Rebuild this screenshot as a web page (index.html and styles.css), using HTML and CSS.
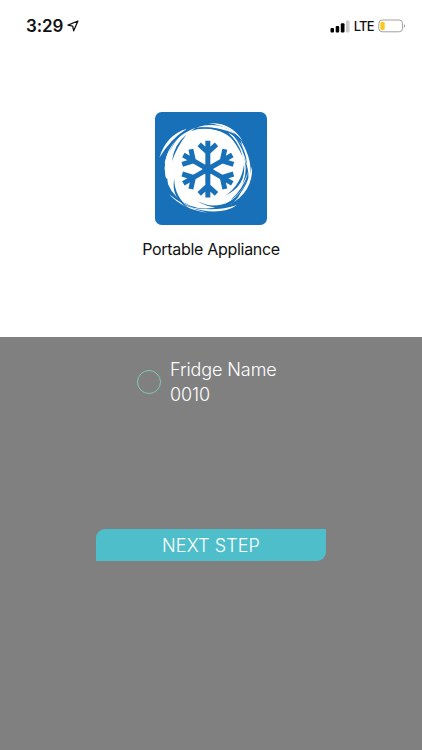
FILE: index.html
```html
<!DOCTYPE html>
<html lang="en">
<head>
    <meta charset="UTF-8">
    <meta name="viewport" content="width=device-width, initial-scale=1.0">
    <title>Portable Appliance</title>
    <link rel="stylesheet" href="styles.css">
</head>
<body>
    <div class="screen">
        <header class="status-bar">
            <div class="status-left">
                <span class="time">3:29</span>
                <svg class="location" width="12" height="12" viewBox="0 0 12 12">
                    <path d="M10.9 1 L1 5.2 L5.7 6.1 L6.7 10.8 Z" fill="none" stroke="#111" stroke-width="1.3" stroke-linejoin="round"/>
                </svg>
            </div>
            <div class="status-right">
                <svg class="signal" width="20" height="14" viewBox="0 0 20 14">
                    <rect x="0.5" y="9" width="3.5" height="4.5" rx="1"/>
                    <rect x="5.7" y="7" width="3.5" height="6.5" rx="1"/>
                    <rect x="10.8" y="4.3" width="3.7" height="9.2" rx="1"/>
                    <rect x="16" y="1.5" width="3.5" height="12" rx="1" fill="#ccc"/>
                </svg>
                <span class="network">LTE</span>
                <svg class="battery" width="28" height="14" viewBox="0 0 28 14">
                    <rect x="0.8" y="1" width="23.8" height="11.8" rx="3.5" fill="#fff" stroke="#a0a0a0"/>
                    <rect x="2.4" y="2.7" width="4.3" height="8.4" rx="1.6" fill="#fdc81e"/>
                    <path d="M26 5 Q28 6.9 26 8.8 Z" fill="#999"/>
                </svg>
            </div>
        </header>
        <section class="brand">
            <svg class="logo" width="112" height="113" viewBox="29 27 337 338" preserveAspectRatio="none">
                <rect x="29" y="27" width="337" height="338" rx="20" fill="#1870b8"/>
                <!-- swirling ice ball -->
                <ellipse cx="180" cy="196" rx="122" ry="120" fill="#fff"/>
                <g fill="#fff">
                    <path d="M42 164 Q62 96 125 77 Q74 109 42 164 Z"/>
                    <path d="M58 180 Q73 103 151 74 Q96 112 75 180 Z"/>
                    <path d="M153 73 Q225 52 270 93 Q225 70 153 73 Z"/>
                    <path d="M190 61 Q258 56 293 114 Q254 69 190 61 Z"/>
                    <path d="M250 88 Q311 125 310 200 Q290 135 250 88 Z"/>
                    <path d="M286 110 Q330 180 311 240 Q312 180 286 110 Z"/>
                    <path d="M321 190 Q325 266 252 305 Q304 265 321 190 Z"/>
                    <path d="M309 205 Q298 283 225 308 Q288 270 309 205 Z"/>
                    <path d="M276 305 Q226 340 130 312 Q216 326 276 305 Z"/>
                    <path d="M71 272 Q112 318 187 328 Q119 314 71 272 Z"/>
                    <path d="M80 254 Q101 300 155 317 Q98 302 80 254 Z"/>
                </g>
                <g fill="#1870b8">
                    <path d="M70 151 Q84 111 120 82 Q88 111 70 151 Z"/>
                    <path d="M80 174 Q85 125 124 94 Q95 131 80 174 Z"/>
                    <path d="M151 77 Q211 63 253 94 Q209 73 151 77 Z"/>
                    <path d="M243 86 Q281 112 293 161 Q275 122 243 86 Z"/>
                    <path d="M263 94 Q303 130 306 187 Q294 132 263 94 Z"/>
                    <path d="M297 183 Q304 247 240 277 Q289 245 297 183 Z"/>
                    <path d="M309 210 Q300 263 256 290 Q294 258 309 210 Z"/>
                    <path d="M288 265 Q260 306 205 307 Q177 306 152 291 Q184 314 232 313 Q275 303 288 265 Z"/>
                    <path d="M87 226 Q86 277 133 318 Q75 285 87 226 Z"/>
                    <path d="M58 226 Q66 265 91 285 Q67 263 66 226 Z"/>
                </g>
                <!-- snowflake -->
                <circle cx="188" cy="198" r="16" fill="#1870b8"/>
                <g fill="none" stroke="#1870b8" stroke-width="15">
                    <path id="arm" d="M188 198 V113 M162 124 L188 148 L214 124"/>
                    <use href="#arm" transform="rotate(60 188 198)"/>
                    <use href="#arm" transform="rotate(120 188 198)"/>
                    <use href="#arm" transform="rotate(180 188 198)"/>
                    <use href="#arm" transform="rotate(240 188 198)"/>
                    <use href="#arm" transform="rotate(300 188 198)"/>
                </g>
            </svg>
            <h1>Portable Appliance</h1>
        </section>
        <main class="panel">
            <label class="fridge">
                <span class="radio"></span>
                <span class="fridge-text">
                    <span class="fridge-name">Fridge Name</span>
                    <span class="fridge-id">0010</span>
                </span>
            </label>
            <button class="btn">NEXT STEP</button>
        </main>
    </div>
</body>
</html>
```
FILE: styles.css
```css
:root {
    --panel-color: #808080;
    --button-color: #4fbecb;
    --ring-color: #82c8b0;
}

* {
    margin: 0;
    padding: 0;
    box-sizing: border-box;
}

body {
    font-family: Inter, 'Liberation Sans', sans-serif;
    background-color: #fff;
    color: #111;
}

.screen {
    display: flex;
    flex-direction: column;
    height: 750px;
    overflow: hidden;
}

.status-bar {
    display: flex;
    justify-content: space-between;
    height: 52px;
    padding: 0 16px 0 26px;
}

.status-left,
.status-right {
    display: flex;
    align-items: center;
}

.time {
    font-size: 17px;
    font-weight: 600;
    letter-spacing: -0.1px;
}

.location {
    margin-left: 4px;
}

.network {
    margin: 0 4px 0 4px;
    font-size: 13px;
    font-weight: 500;
    letter-spacing: -0.7px;
}

.brand {
    display: flex;
    flex-direction: column;
    align-items: center;
    height: 285px;
    padding-top: 60px;
}

.logo {
    display: block;
}

.brand h1 {
    margin-top: 13px;
    font-size: 16px;
    font-weight: 400;
    letter-spacing: -0.3px;
    line-height: 22px;
}

.panel {
    display: flex;
    flex: 1;
    flex-direction: column;
    align-items: center;
    padding-top: 20px;
    background-color: var(--panel-color);
}

.fridge {
    display: flex;
    align-items: center;
    width: 148px;
    color: #fff;
}

.radio {
    flex: none;
    width: 24px;
    height: 24px;
    margin-right: 9px;
    border: 1px solid var(--ring-color);
    border-radius: 50%;
}

.fridge-text {
    display: flex;
    flex-direction: column;
    font-size: 18px;
    font-weight: 300;
    letter-spacing: -0.1px;
    line-height: 25px;
    white-space: nowrap;
}

.btn {
    width: 230px;
    height: 32px;
    margin-top: 122px;
    border: none;
    border-radius: 9px 0 9px 0;
    background-color: var(--button-color);
    color: #fff;
    font-family: inherit;
    font-size: 18px;
    font-weight: 300;
    letter-spacing: 0.1px;
}
```
